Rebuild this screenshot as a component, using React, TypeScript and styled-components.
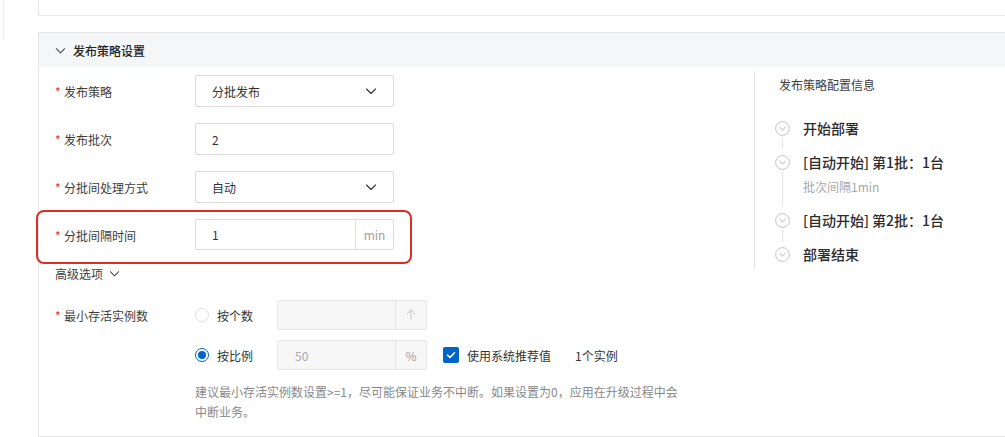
import { FC, ReactNode } from 'react'
import styled, { createGlobalStyle } from 'styled-components'

const colors = {
  text: '#333333',
  label: '#3d3d3d',
  muted: '#888888',
  faint: '#a8a8a8',
  border: '#dcdcdc',
  line: '#e6e6e6',
  red: '#d93026',
  blue: '#0064c8',
  headerBg: '#f5f6f8',
  disabledBg: '#f7f7f7',
}

const GlobalStyle = createGlobalStyle`
  html, body {
    margin: 0;
    padding: 0;
    background: #ffffff;
    overflow: hidden;
  }
  body {
    font-family: "Noto Sans CJK SC", "Noto Sans", sans-serif;
    color: ${colors.text};
    font-size: 12px;
  }
`

const StyledPage = styled.div`
  display: flex;
  width: 1010px;
`

const StyledRail = styled.div`
  width: 34px;
  height: 40px;
  margin-left: 3px;
  border-left: 1px solid #ececec;
  flex-shrink: 0;
`

const StyledMain = styled.div`
  flex: 1;
  display: flex;
  flex-direction: column;
  gap: 16px;
`

const StyledTopCard = styled.div`
  height: 15px;
  border: 1px solid ${colors.line};
  border-top: none;
  background: #fff;
`

const StyledSection = styled.div`
  border: 1px solid ${colors.line};
  height: 403px;
  display: flex;
  flex-direction: column;
`

const StyledSectionHeader = styled.div`
  height: 34px;
  background: ${colors.headerBg};
  display: flex;
  align-items: center;
  gap: 7px;
  padding-left: 16px;
  font-size: 12px;
  font-weight: 500;
  color: #222;
`

const StyledSectionBody = styled.div`
  display: flex;
  flex: 1;
`

const StyledForm = styled.div`
  flex: 1;
  padding: 8px 0 0 16px;
  display: flex;
  flex-direction: column;
`

const StyledRow = styled.div<{ $highlight?: boolean; $gap?: number }>`
  position: relative;
  display: flex;
  align-items: flex-start;
  margin-bottom: ${(p) => p.$gap ?? 16}px;
  width: 339px;

  ${(p) =>
    p.$highlight &&
    `
    &::after {
      content: '';
      position: absolute;
      top: -9px;
      bottom: -13px;
      left: -19px;
      right: -18px;
      border: 2px solid ${colors.red};
      border-radius: 8px;
      pointer-events: none;
    }
  `}
`

const StyledOptionRow = styled.div`
  display: flex;
  align-items: flex-start;
`

const StyledLabel = styled.div<{ $height?: number }>`
  width: 140px;
  flex-shrink: 0;
  height: ${(p) => p.$height ?? 32}px;
  display: flex;
  align-items: center;
  color: ${colors.label};
  font-size: 12px;
`

const StyledStar = styled.span`
  color: ${colors.red};
  width: 9px;
  display: inline-block;
`

const StyledField = styled.div<{ $width?: number; $disabled?: boolean; $height?: number }>`
  width: ${(p) => p.$width ?? 200}px;
  height: ${(p) => p.$height ?? 32}px;
  box-sizing: border-box;
  border: 1px solid ${(p) => (p.$disabled ? '#e6e6e6' : colors.border)};
  background: ${(p) => (p.$disabled ? colors.disabledBg : '#fff')};
  border-radius: 2px;
  display: flex;
  align-items: center;
  font-size: 12px;
  color: ${(p) => (p.$disabled ? colors.faint : colors.text)};
`

const StyledValue = styled.div<{ $pad?: number }>`
  flex: 1;
  padding-left: ${(p) => p.$pad ?? 16}px;
`

const StyledAddon = styled.div<{ $width: number }>`
  width: ${(p) => p.$width}px;
  height: 100%;
  border-left: 1px solid #e3e3e3;
  display: flex;
  align-items: center;
  justify-content: center;
  color: #a0a0a0;
  font-size: 12px;
`

const StyledChevronWrap = styled.div`
  width: 28px;
  display: flex;
  align-items: center;
`

const StyledAdvanced = styled.div`
  display: flex;
  align-items: center;
  gap: 6px;
  height: 20px;
  color: ${colors.label};
  margin-top: -2px;
  margin-bottom: 17px;
`

const StyledOptions = styled.div`
  display: flex;
  flex-direction: column;
  gap: 10px;
`

const StyledOptionLine = styled.div`
  display: flex;
  align-items: center;
  height: 30px;
`

const StyledRadio = styled.span<{ $checked?: boolean }>`
  width: 14px;
  height: 14px;
  box-sizing: border-box;
  border-radius: 50%;
  border: 1px solid ${(p) => (p.$checked ? colors.blue : '#e0e0e0')};
  background: #fff;
  display: flex;
  align-items: center;
  justify-content: center;
  flex-shrink: 0;

  &::after {
    content: '';
    display: ${(p) => (p.$checked ? 'block' : 'none')};
    width: 8px;
    height: 8px;
    border-radius: 50%;
    background: ${colors.blue};
  }
`

const StyledRadioLabel = styled.span`
  width: 60px;
  padding-left: 8px;
  color: ${colors.text};
  font-size: 12px;
`

const StyledCheck = styled.span`
  width: 16px;
  height: 16px;
  border-radius: 2px;
  background: ${colors.blue};
  display: flex;
  align-items: center;
  justify-content: center;
  margin-left: 16px;
`

const StyledCheckLabel = styled.span`
  padding-left: 8px;
  color: ${colors.text};
`

const StyledInstances = styled.span`
  padding-left: 24px;
  color: ${colors.text};
`

const StyledHelp = styled.div`
  width: 490px;
  line-height: 20px;
  color: ${colors.muted};
  font-size: 12px;
  margin-top: 2px;
`

const StyledInfo = styled.div`
  width: 255px;
  margin-top: 4px;
  height: 199px;
  border-left: 1px solid ${colors.line};
  box-sizing: border-box;
  padding-left: 20px;
  display: flex;
  flex-direction: column;
`

const StyledInfoTitle = styled.div`
  padding-left: 4px;
  line-height: 20px;
  margin-top: 4px;
  color: ${colors.label};
  font-size: 12px;
  margin-bottom: 22px;
`

const StyledTimeline = styled.div`
  display: flex;
  flex-direction: column;
  gap: 12px;
`

const StyledStep = styled.div<{ $last?: boolean }>`
  position: relative;
  display: flex;
  flex-direction: column;

  &::before {
    content: '';
    display: ${(p) => (p.$last ? 'none' : 'block')};
    position: absolute;
    left: 7px;
    top: 20px;
    bottom: -10px;
    width: 1px;
    background: #e3e3e3;
  }
`

const StyledStepHead = styled.div`
  display: flex;
  align-items: center;
  gap: 13px;
  height: 22px;
  font-size: 14px;
  font-weight: 500;
  color: #2b2b2b;
`

const StyledStepSub = styled.div`
  padding-left: 28px;
  margin-top: 4px;
  line-height: 20px;
  font-size: 12px;
  color: ${colors.faint};
`

const ChevronDown: FC<{ size?: number; color?: string }> = ({ size = 12, color = '#333' }) => (
  <svg width={size} height={size} viewBox="0 0 12 12" fill="none">
    <path d="M1.5 4 L6 8.5 L10.5 4" stroke={color} strokeWidth="1.1" strokeLinecap="round" strokeLinejoin="round" />
  </svg>
)

const StepIcon: FC = () => (
  <svg width="15" height="15" viewBox="0 0 15 15" fill="none">
    <circle cx="7.5" cy="7.5" r="6.9" stroke="#c4c4c4" strokeWidth="1" fill="#fff" />
    <path d="M4.8 6.4 L7.5 9 L10.2 6.4" stroke="#b0b0b0" strokeWidth="1" strokeLinecap="round" strokeLinejoin="round" />
  </svg>
)

const ArrowUp: FC = () => (
  <svg width="12" height="14" viewBox="0 0 12 14" fill="none">
    <path d="M6 2 V12 M2 6 L6 2 L10 6" stroke="#c8c8c8" strokeWidth="1" strokeLinecap="round" strokeLinejoin="round" />
  </svg>
)

const CheckMark: FC = () => (
  <svg width="10" height="10" viewBox="0 0 10 10" fill="none">
    <path d="M1.5 5.2 L4 7.5 L8.5 2.8" stroke="#fff" strokeWidth="1.6" strokeLinecap="round" strokeLinejoin="round" />
  </svg>
)

interface IFormRowProps {
  label: string
  highlight?: boolean
  gap?: number
  children: ReactNode
}

const FormRow: FC<IFormRowProps> = ({ label, highlight, gap, children }) => (
  <StyledRow $highlight={highlight} $gap={gap}>
    <StyledLabel>
      <StyledStar>*</StyledStar>
      {label}
    </StyledLabel>
    {children}
  </StyledRow>
)

const Select: FC<{ value: string }> = ({ value }) => (
  <StyledField>
    <StyledValue>{value}</StyledValue>
    <StyledChevronWrap>
      <ChevronDown />
    </StyledChevronWrap>
  </StyledField>
)

interface IStep {
  title: string
  sub?: string
}

const steps: IStep[] = [
  { title: '开始部署' },
  { title: '[自动开始] 第1批：1台', sub: '批次间隔1min' },
  { title: '[自动开始] 第2批：1台' },
  { title: '部署结束' },
]

export default function App() {
  return (
    <>
      <GlobalStyle />
      <StyledPage>
        <StyledRail />
        <StyledMain>
          <StyledTopCard />
          <StyledSection>
            <StyledSectionHeader>
              <ChevronDown size={11} color="#444" />
              发布策略设置
            </StyledSectionHeader>
            <StyledSectionBody>
              <StyledForm>
                <FormRow label="发布策略">
                  <Select value="分批发布" />
                </FormRow>
                <FormRow label="发布批次">
                  <StyledField>
                    <StyledValue>2</StyledValue>
                  </StyledField>
                </FormRow>
                <FormRow label="分批间处理方式">
                  <Select value="自动" />
                </FormRow>
                <FormRow label="分批间隔时间" highlight gap={14}>
                  <StyledField $height={31}>
                    <StyledValue>1</StyledValue>
                    <StyledAddon $width={37}>min</StyledAddon>
                  </StyledField>
                </FormRow>
                <StyledAdvanced>
                  高级选项
                  <ChevronDown size={11} color="#444" />
                </StyledAdvanced>
                <StyledOptionRow>
                  <StyledLabel $height={30}>
                    <StyledStar>*</StyledStar>
                    最小存活实例数
                  </StyledLabel>
                  <StyledOptions>
                    <StyledOptionLine>
                      <StyledRadio />
                      <StyledRadioLabel>按个数</StyledRadioLabel>
                      <StyledField $width={150} $height={30} $disabled>
                        <StyledValue />
                        <StyledAddon $width={30}>
                          <ArrowUp />
                        </StyledAddon>
                      </StyledField>
                    </StyledOptionLine>
                    <StyledOptionLine>
                      <StyledRadio $checked />
                      <StyledRadioLabel>按比例</StyledRadioLabel>
                      <StyledField $width={150} $height={30} $disabled>
                        <StyledValue $pad={17}>50</StyledValue>
                        <StyledAddon $width={30}>%</StyledAddon>
                      </StyledField>
                      <StyledCheck>
                        <CheckMark />
                      </StyledCheck>
                      <StyledCheckLabel>使用系统推荐值</StyledCheckLabel>
                      <StyledInstances>1个实例</StyledInstances>
                    </StyledOptionLine>
                    <StyledHelp>
                      建议最小存活实例数设置&gt;=1，尽可能保证业务不中断。如果设置为0，应用在升级过程中会中断业务。
                    </StyledHelp>
                  </StyledOptions>
                </StyledOptionRow>
              </StyledForm>
              <StyledInfo>
                <StyledInfoTitle>发布策略配置信息</StyledInfoTitle>
                <StyledTimeline>
                  {steps.map((step, i) => (
                    <StyledStep key={step.title} $last={i === steps.length - 1}>
                      <StyledStepHead>
                        <StepIcon />
                        {step.title}
                      </StyledStepHead>
                      {step.sub && <StyledStepSub>{step.sub}</StyledStepSub>}
                    </StyledStep>
                  ))}
                </StyledTimeline>
              </StyledInfo>
            </StyledSectionBody>
          </StyledSection>
        </StyledMain>
      </StyledPage>
    </>
  )
}
